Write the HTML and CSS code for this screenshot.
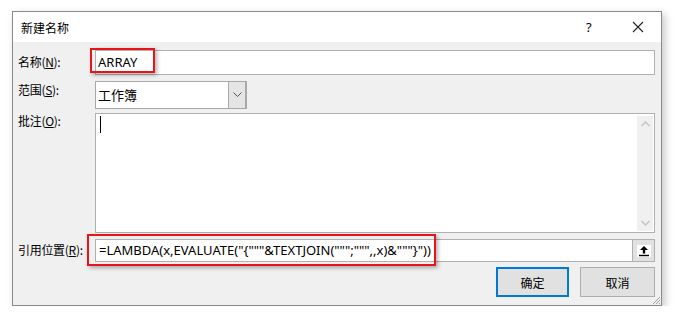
FILE: index.html
```html
<!DOCTYPE html>
<html lang="zh-CN">

<head>
    <meta charset="UTF-8" />
    <title>新建名称</title>
    <link rel="stylesheet" href="styles.css">
</head>

<body>
    <div class="dialog">
        <div class="titlebar">
            <span class="title">新建名称</span>
            <span class="help">?</span>
            <svg class="close" width="12" height="12" viewBox="0 0 12 12">
                <path d="M1 1 L11 11 M11 1 L1 11" stroke="#222" stroke-width="1.1" fill="none" />
            </svg>
        </div>

        <div class="content">
            <div class="row row-name">
                <label class="lbl">名称(<u>N</u>):</label>
                <div class="field">
                    <div class="textbox">ARRAY</div>
                    <div class="mark mark-name"></div>
                </div>
            </div>

            <div class="row row-scope">
                <label class="lbl">范围(<u>S</u>):</label>
                <div class="combo">
                    <span class="combo-text">工作簿</span>
                    <span class="combo-btn">
                        <svg width="9" height="6" viewBox="0 0 9 6">
                            <path d="M0.5 0.5 L4.5 4.5 L8.5 0.5" stroke="#555" stroke-width="1" fill="none" />
                        </svg>
                    </span>
                </div>
            </div>

            <div class="row row-notes">
                <label class="lbl">批注(<u>O</u>):</label>
                <div class="textarea">
                    <span class="caret"></span>
                    <div class="scrollbar">
                        <svg width="9" height="6" viewBox="0 0 9 6">
                            <path d="M0.5 5 L4.5 1 L8.5 5" stroke="#c4c4c4" stroke-width="1.5" fill="none" />
                        </svg>
                        <svg width="9" height="6" viewBox="0 0 9 6">
                            <path d="M0.5 1 L4.5 5 L8.5 1" stroke="#c4c4c4" stroke-width="1.5" fill="none" />
                        </svg>
                    </div>
                </div>
            </div>

            <div class="row row-ref">
                <label class="lbl">引用位置(<u>R</u>):</label>
                <div class="field">
                    <div class="refbox">
                        <span class="formula">=LAMBDA(x,EVALUATE("{"""&amp;TEXTJOIN(""";""",,x)&amp;"""}"))</span>
                        <span class="ref-btn">
                            <svg width="14" height="12" viewBox="0 0 14 12">
                                <rect width="14" height="12" fill="#fff" />
                                <path d="M7 1 L11 5 L8.2 5 L8.2 8.5 L5.8 8.5 L5.8 5 L3 5 Z" fill="#000" />
                                <rect x="2" y="9.8" width="10" height="1.4" fill="#000" />
                            </svg>
                        </span>
                    </div>
                    <div class="mark mark-ref"></div>
                </div>
            </div>

            <div class="buttons">
                <button class="btn btn-default">确定</button>
                <button class="btn">取消</button>
            </div>

            <svg class="grip" width="10" height="10" viewBox="0 0 10 10">
                <path d="M9 2 L2 9 M9 5 L5 9 M9 8 L8 9" stroke="#a0a0a0" stroke-width="1" fill="none" />
            </svg>
        </div>
    </div>
</body>

</html>
```

FILE: styles.css
```css
body {
    margin: 0;
    background: #fff;
    font-family: "Segoe UI", "Noto Sans", "Noto Sans CJK SC", sans-serif;
    font-size: 12px;
    color: #000;
}

.dialog {
    position: relative;
    width: 648px;
    margin: 11px 0 0 12px;
    border: 1px solid #8a8a8a;
    background: #f0f0f0;
    box-shadow: 3px 3px 8px rgba(0, 0, 0, 0.22);
}

.titlebar {
    display: flex;
    align-items: center;
    height: 30px;
    padding-left: 8px;
    background: #fff;
    font-family: "Noto Sans CJK SC", sans-serif;
}

.title {
    flex: 1;
    font-size: 12px;
}

.help {
    width: 14px;
    margin-right: 32px;
    font-family: "Noto Sans", sans-serif;
    font-size: 13px;
}

.close {
    margin-right: 17px;
}

.content {
    position: relative;
    padding: 8px 6px 8px 5px;
}

.row {
    display: flex;
}

.lbl {
    width: 77px;
    line-height: 16px;
    font-family: "Noto Sans CJK SC", sans-serif;
    letter-spacing: -0.3px;
}

.lbl u {
    text-decoration-thickness: 1px;
}

.field {
    position: relative;
    flex: 1;
}

.textbox {
    height: 23px;
    line-height: 23px;
    padding-left: 2px;
    border: 1px solid #b0b0b0;
    background: #fff;
    font-size: 13px;
}

.row-name .lbl {
    padding-top: 4px;
}

.row-scope {
    margin-top: 6px;
}

.row-scope .lbl {
    padding-top: 1px;
}

.combo {
    display: flex;
    width: 150px;
    height: 26px;
    border: 1px solid #a8a8a8;
    background: #fff;
}

.combo-text {
    flex: 1;
    padding-left: 2px;
    line-height: 26px;
    font-family: "Noto Sans CJK SC", sans-serif;
    font-size: 13px;
}

.combo-btn {
    display: flex;
    align-items: center;
    justify-content: center;
    width: 16px;
    background: #e5e5e5;
    border-left: 1px solid #a8a8a8;
    border-right: 1px solid #a8a8a8;
}

.row-notes {
    margin-top: 4px;
}

.textarea {
    position: relative;
    flex: 1;
    height: 118px;
    border: 1px solid #b0b0b0;
    background: #fff;
}

.caret {
    position: absolute;
    left: 4px;
    top: 2px;
    width: 1px;
    height: 17px;
    background: #000;
}

.scrollbar {
    position: absolute;
    top: 2px;
    right: 1px;
    bottom: 1px;
    width: 16px;
    display: flex;
    flex-direction: column;
    justify-content: space-between;
    align-items: center;
    padding: 5px 0;
    box-sizing: border-box;
    background: #f0f0f0;
}

.row-ref {
    margin-top: 6px;
}

.row-ref .lbl {
    padding-top: 3px;
    white-space: nowrap;
}

.refbox {
    display: flex;
    height: 21px;
    border: 1px solid #b0b0b0;
    background: #fff;
}

.formula {
    flex: 1;
    padding-left: 3px;
    line-height: 21px;
    font-size: 13px;
}

.ref-btn {
    display: flex;
    align-items: center;
    justify-content: center;
    width: 21px;
    background: #e1e1e1;
    border-left: 1px solid #b0b0b0;
}

.mark {
    position: absolute;
    border: 2px solid #e8141a;
    box-shadow: 2px 2px 4px rgba(0, 0, 0, 0.3);
}

.mark-name {
    left: -5px;
    top: -2px;
    width: 61px;
    height: 21px;
}

.mark-ref {
    left: -8px;
    top: -5px;
    width: 345px;
    height: 28px;
}

.buttons {
    display: flex;
    justify-content: flex-end;
    gap: 11px;
    margin-top: 5px;
}

.btn {
    width: 75px;
    height: 30px;
    border: 1px solid #adadad;
    background: #e1e1e1;
    font-family: "Noto Sans CJK SC", sans-serif;
    font-size: 12px;
    color: #000;
}

.btn-default {
    width: 73px;
    border: 2px solid #0078d7;
}

.grip {
    position: absolute;
    right: 0;
    bottom: 0;
}
```
